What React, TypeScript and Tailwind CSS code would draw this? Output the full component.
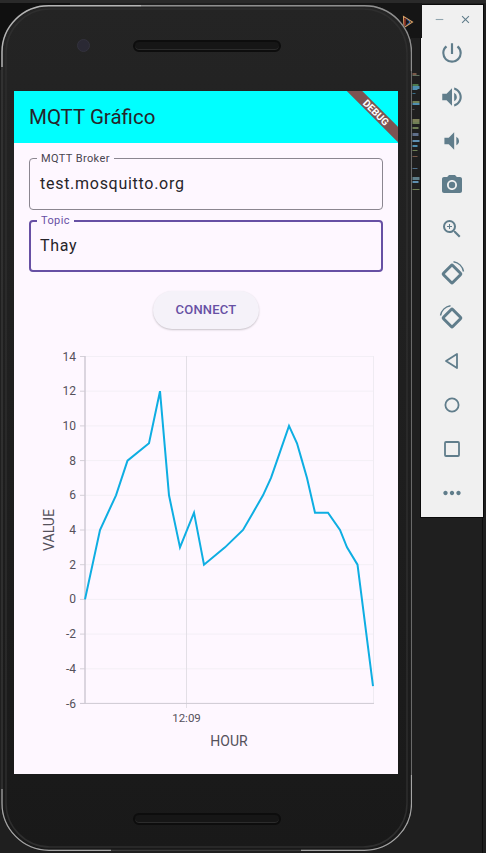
import { MdPowerSettingsNew, MdVolumeUp, MdVolumeDown, MdPhotoCamera, MdZoomIn, MdMoreHoriz, MdRemove, MdClose } from "react-icons/md";

// ── Chart data (pixel x in screenshot, value on the y axis) ──────────────────
const points: [number, number][] = [
  [85, 0], [100, 4], [116, 6], [127.5, 8], [149, 9], [160, 12], [169, 6], [180, 3], [194, 5], [204, 2],
  [225, 3], [243, 4], [253, 5], [263, 6], [271, 7], [277, 8], [289, 10], [297, 9], [302, 8], [307, 7],
  [315, 5], [328, 5], [340, 4], [347, 3], [357.5, 2], [373, -5],
];
const ticks = [14, 12, 10, 8, 6, 4, 2, 0, -2, -4, -6];
const yOf = (v: number) => 598.4 - 17.35 * v;

// Log output peeking out behind the emulator window
const logRows: [number, number, number, string][] = [
  [73, 4, 2, "#7a5a4a"], [75, 7, 1, "#5f6f5f"], [84, 6, 2, "#4d7a4d"], [86, 7, 3, "#4f8fb0"], [89, 5, 1, "#4f8fb0"],
  [93, 3, 1, "#3a6f8a"], [101, 7, 2, "#6f7f55"], [103, 7, 2, "#4f8fb0"], [109, 2, 1, "#555"],
  [119, 7, 3, "#7d8058"], [122, 7, 2, "#6f7f55"], [127, 6, 2, "#6f7f55"], [133, 6, 3, "#5f6f8a"], [140, 7, 2, "#5f8fb0"],
  [145, 5, 2, "#4f8fb0"], [150, 5, 1, "#6f7f55"], [156, 5, 1, "#7a5a4a"], [168, 5, 1, "#4f6f8a"], [177, 7, 3, "#5f7f8a"],
  [181, 6, 2, "#5f8fb0"], [189, 7, 1, "#6f7f55"],
];

function Chart() {
  return (
    <svg viewBox="14 340 384 420" className="block w-[384px] h-[420px] font-['Roboto',sans-serif]">
      {ticks.map((t) => (
        <g key={t}>
          <line x1={85} x2={373.5} y1={yOf(t)} y2={yOf(t)} stroke="#f3eff6" strokeWidth={1} />
          <line x1={80} x2={85} y1={yOf(t)} y2={yOf(t)} stroke="#d4d0d8" strokeWidth={1} />
          <text x={76} y={yOf(t) + 4} textAnchor="end" fontSize={12} fill="#55515b">{t}</text>
        </g>
      ))}
      <line x1={373.5} x2={373.5} y1={355} y2={702} stroke="#efebf2" strokeWidth={1} />
      <line x1={186.5} x2={186.5} y1={355} y2={707} stroke="#e3dfe6" strokeWidth={1} />
      <line x1={85} x2={85} y1={355} y2={703} stroke="#cfcad4" strokeWidth={1.5} />
      <line x1={80} x2={374} y1={702.4} y2={702.4} stroke="#cfcad4" strokeWidth={1} />
      <polyline
        points={points.map(([x, v]) => `${x},${yOf(v)}`).join(" ")}
        fill="none"
        stroke="#0eaee2"
        strokeWidth={2}
        strokeLinejoin="miter"
      />
      <text x={186.5} y={721} textAnchor="middle" fontSize={11.5} fill="#55515b">12:09</text>
      <text x={229} y={745} textAnchor="middle" fontSize={14} fill="#55515b">HOUR</text>
      <text x={0} y={0} transform="translate(54 529) rotate(-90)" textAnchor="middle" fontSize={14} fill="#55515b">VALUE</text>
    </svg>
  );
}

function Field({ label, value, active }: { label: string; value: string; active?: boolean }) {
  return (
    <div className={`relative h-[52px] rounded-[4px] border ${active ? "border-2 border-[#6750a4]" : "border-[#8b8690]"}`}>
      <span
        className={`absolute px-[4px] bg-[#fef7ff] text-[11px] leading-[14px] tracking-[0.4px] ${active ? "left-[6px] -top-[8px] text-[#6750a4]" : "left-[7px] -top-[7px] text-[#49454f]"}`}
      >
        {label}
      </span>
      <div className={`h-full flex items-center text-[16px] tracking-[0.72px] text-[#26242a] ${active ? "pl-[9px]" : "pl-[10px]"}`}>
        {value}
      </div>
    </div>
  );
}

function Speaker() {
  return (
    <div className="mx-auto w-[148px] h-[12px] rounded-full bg-[#161616] border-[2px] border-[#0d0d0d] shadow-[inset_0_-1px_0_#2c2c2c]" />
  );
}

// Silver rim of the phone body, drawn over its edge
function PhoneRim() {
  return (
    <svg viewBox="0 0 411 846" className="absolute inset-0 w-[411px] h-[846px] pointer-events-none">
      <rect x="5" y="4" width="401" height="838" rx="44" fill="none" stroke="#2e2e2e" strokeWidth="1.5" />
      <rect x="1" y="0.7" width="409.5" height="844.6" rx="47" fill="none" stroke="#3c3c3c" strokeWidth="1.2" />
      <path d="M1 62 V47 A46.5 46.5 0 0 1 47.5 0.7 H140" fill="none" stroke="#b5b5b5" strokeWidth="1.4" />
      <path d="M140 0.7 H363.5 A47 47 0 0 1 410.5 47.7 V66" fill="none" stroke="#8f8f8f" strokeWidth="1.4" />
      <path d="M410.5 66 V780" fill="none" stroke="#6a6a6a" strokeWidth="1" />
      <path d="M1 784 V798 A47 47 0 0 0 48 845.3 H110" fill="none" stroke="#a5a5a5" strokeWidth="1.2" />
      <path d="M300 845.3 H363.5 A47 47 0 0 0 410.5 798 V770" fill="none" stroke="#a5a5a5" strokeWidth="1.2" />
    </svg>
  );
}

// ── Emulator side toolbar ────────────────────────────────────────────────────
function RotateIcon({ flip }: { flip?: boolean }) {
  return (
    <svg viewBox="0 0 26 26" className="w-[26px] h-[26px]" style={flip ? { transform: "scaleX(-1)" } : undefined}>
      <rect x="6.5" y="7.5" width="13" height="13" rx="1" transform="rotate(45 13 14)" fill="none" stroke="#607d8b" strokeWidth="3" />
      <path d="M14.5 1.8 A12 12 0 0 1 24.5 11.5" fill="none" stroke="#607d8b" strokeWidth="1.4" />
    </svg>
  );
}

function ToolButton({ children }: { children: React.ReactNode }) {
  return <div className="h-[44px] flex items-center justify-center text-[#607d8b]">{children}</div>;
}

function SidePanel() {
  return (
    <aside className="ml-[8px] mt-[4px] w-[64px] h-[514px] bg-[#f0f0f0] border border-[#0a0a0a] flex flex-col">
      <div className="h-[24px] mt-[2px] flex items-center justify-between pl-[12px] pr-[11px] text-[#90a4ae]">
        <MdRemove size={13} />
        <MdClose size={13} className="text-[#607d8b]" />
      </div>
      <div>
        <ToolButton><MdPowerSettingsNew size={26} /></ToolButton>
        <ToolButton><MdVolumeUp size={26} /></ToolButton>
        <ToolButton><MdVolumeDown size={26} /></ToolButton>
        <ToolButton><MdPhotoCamera size={24} /></ToolButton>
        <ToolButton><MdZoomIn size={24} /></ToolButton>
        <ToolButton><RotateIcon /></ToolButton>
        <ToolButton><RotateIcon flip /></ToolButton>
        <ToolButton>
          <svg viewBox="0 0 24 24" className="w-[24px] h-[24px]"><path d="M17 5 V19 L6 12 Z" fill="none" stroke="#607d8b" strokeWidth="1.8" strokeLinejoin="round" /></svg>
        </ToolButton>
        <ToolButton>
          <svg viewBox="0 0 24 24" className="w-[24px] h-[24px]"><circle cx="12" cy="12" r="6.6" fill="none" stroke="#607d8b" strokeWidth="1.8" /></svg>
        </ToolButton>
        <ToolButton>
          <svg viewBox="0 0 24 24" className="w-[24px] h-[24px]"><rect x="5" y="5" width="14" height="14" rx="1" fill="none" stroke="#607d8b" strokeWidth="1.8" /></svg>
        </ToolButton>
        <ToolButton><MdMoreHoriz size={26} /></ToolButton>
      </div>
    </aside>
  );
}

function DebugBanner() {
  return (
    <div className="absolute top-0 right-0 w-[60px] h-[52px] overflow-hidden">
      <div className="absolute left-0 top-[16px] w-[76px] h-[11px] rotate-45 bg-[#7d5352] flex items-center justify-center text-[10px] leading-none font-bold text-white">
        DEBUG
      </div>
    </div>
  );
}

export default function App() {
  return (
    <div className="relative w-[486px] h-[853px] overflow-hidden bg-[#1f1f1f] flex items-start font-['Roboto',sans-serif]">
      {/* Backdrop behind the emulator */}
      <div className="absolute top-0 left-0 w-[70px] h-[70px] bg-[#101010]" />
      <div className="absolute top-0 left-[350px] w-[72px] h-[38px] bg-[#151515]" />
      <div className="absolute top-0 left-0 w-full h-[3px] bg-[#2a2a2a]" />
      <div className="absolute top-[518px] bottom-0 left-[482px] w-[1px] bg-[#0e0e0e]" />
      <svg viewBox="0 0 12 14" className="absolute left-[402px] top-[15px] w-[12px] h-[14px]">
        <path d="M1.5 1.5 L10.5 7 L2 12.5 Z" fill="none" stroke="#d9a066" strokeWidth="1.1" />
        <path d="M3 3.5 V10.5" stroke="#c0392b" strokeWidth="1.2" />
        <path d="M4.5 4 L8 7 L4.5 10" fill="none" stroke="#3f6fb5" strokeWidth="1" />
      </svg>
      <svg viewBox="0 0 9 130" className="absolute left-[412px] top-[68px] w-[9px] h-[130px]">
        {logRows.map(([y, w, h, c]) => (
          <rect key={y} x={0.5} y={y - 68} width={w} height={h} fill={c} />
        ))}
      </svg>

      {/* Phone */}
      <div className="relative ml-[1px] mt-[5px] w-[411px] h-[846px] rounded-[47px] bg-gradient-to-b from-[#242424] to-[#191919] flex flex-col shrink-0">
        <PhoneRim />
        <div className="relative h-[86px] pt-[35px]">
          <div className="absolute left-[76px] top-[34px] w-[13px] h-[13px] rounded-full bg-[#2a2934] border border-[#33323d]" />
          <Speaker />
        </div>
        {/* Screen */}
        <main className="relative ml-[13px] w-[384px] h-[683px] bg-[#fef7ff] flex flex-col">
          <header className="relative h-[52px] bg-[#00ffff] flex items-center pl-[15px] text-[20.5px] text-[#26242a]">
            MQTT Gráfico
            <DebugBanner />
          </header>
          <div className="px-[15px] pt-[15px] flex flex-col gap-[10px]">
            <Field label="MQTT Broker" value="test.mosquitto.org" />
            <Field label="Topic" value="Thay" active />
          </div>
          <button className="self-center mt-[19px] w-[106px] h-[38px] rounded-full bg-[#f5f2f9] shadow-[0_1px_2px_rgba(0,0,0,0.22)] text-[13px] font-medium tracking-[0.2px] text-[#6750a4]">
            CONNECT
          </button>
          <div className="mt-[12px]">
            <Chart />
          </div>
        </main>
        <div className="mt-[39px]">
          <Speaker />
        </div>
      </div>
      <SidePanel />
    </div>
  );
}
